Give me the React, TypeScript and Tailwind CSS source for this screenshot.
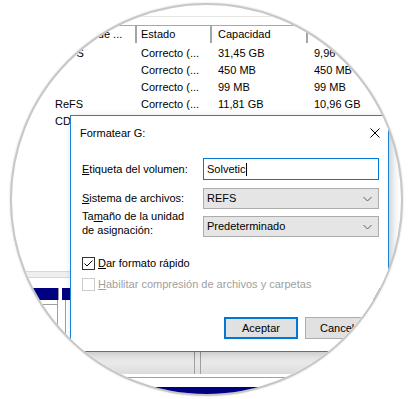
import React from "react";

function Row({ c1, c2, c3, c4 }: { c1?: string; c2?: string; c3?: string; c4?: string }) {
  return (
    <div className="flex h-[17px] items-center whitespace-nowrap">
      <div className="w-[38px] shrink-0" />
      <div className="w-[87px] shrink-0 pl-[5px]">{c1}</div>
      <div className="w-[75px] shrink-0 pl-[4px]">{c2}</div>
      <div className="w-[96px] shrink-0 pl-[6px]">{c3}</div>
      <div className="shrink-0 pl-[6px]">{c4}</div>
    </div>
  );
}

function Chevron() {
  return (
    <svg width="9" height="6" viewBox="0 0 9 6" className="shrink-0">
      <polyline points="0.5,1 4.5,5 8.5,1" fill="none" stroke="#5c5c5c" strokeWidth="1" />
    </svg>
  );
}

export default function App() {
  return (
    <div className="w-[410px] h-[399px] bg-white overflow-hidden font-['Liberation_Sans',Arial,sans-serif] text-[11px] text-black leading-none">
      <div className="ml-[10px] mt-[3px] w-[393px] h-[393px] rounded-full border-2 border-[#c8c8c8] overflow-hidden relative bg-white shadow-[0_0_2px_rgba(0,0,0,0.2)]">
        {/* list view */}
        <div className="h-[11px]" />
        <div className="h-px bg-[#e6e6e6]" />
        <div className="h-[8px]" />
        <div className="flex h-[18px] border-t border-[#a8a8a8] whitespace-nowrap">
          <div className="w-[38px] shrink-0" />
          <div className="w-[87px] shrink-0 pl-[5px] border-r-2 border-[#a5a5a5] flex items-center">Sistema de ...</div>
          <div className="w-[75px] shrink-0 pl-[4px] border-r-2 border-[#a5a5a5] flex items-center">Estado</div>
          <div className="w-[96px] shrink-0 pl-[6px] border-r-2 border-[#a5a5a5] flex items-center">Capacidad</div>
          <div className="shrink-0 pl-[6px] flex items-center">Espacio libre</div>
        </div>
        <div className="h-[2px]" />
        <Row c1="NTFS" c2="Correcto (..." c3="31,45 GB" c4="9,96 GB" />
        <Row c2="Correcto (..." c3="450 MB" c4="450 MB" />
        <Row c2="Correcto (..." c3="99 MB" c4="99 MB" />
        <Row c1="ReFS" c2="Correcto (..." c3="11,81 GB" c4="10,96 GB" />
        <Row c1="CDFS" c2="Correcto (..." c3="4,20 GB" c4="0 MB" />

        {/* graphical disk area */}
        <div className="h-[141px]" />
        <div className="h-[7px] bg-[#efefef] border-t border-[#d8d8d8] border-b border-[#a8a8a8]" />
        <div className="h-[10px]" />
        <div className="flex h-[12px]">
          <div className="w-[46px] bg-[#000080]" />
          <div className="w-[4px] border-l border-[#9a9a9a] bg-white" />
          <div className="flex-1 bg-[#000080]" />
        </div>
        <div className="flex h-[52px]">
          <div className="w-[45px] flex flex-col">
            <div className="h-[4px]" />
            <div className="h-px bg-[#a0a0a0]" />
          </div>
          <div className="w-px bg-[#a0a0a0]" />
          <div className="w-[7px]" />
          <div className="w-px bg-[#a0a0a0]" />
          <div className="flex-1" />
        </div>
        <div className="flex h-[22px] bg-gradient-to-b from-[#f7f7f7] to-[#dcdcdc]">
          <div className="w-[182px]" />
          <div className="w-px bg-[#a0a0a0]" />
          <div className="w-[5px]" />
          <div className="w-px bg-[#a0a0a0]" />
        </div>
        <div className="h-[3px]" />
        <div className="h-px bg-[#a0a0a0]" />
        <div className="h-[9px]" />
        <div className="h-[20px] bg-[#000080]" />

        {/* dialog */}
        <div className="absolute left-[58px] top-[110px] w-[319px] h-[237px] border border-[#1883d7] bg-white flex flex-col shadow-[3px_3px_8px_rgba(0,0,0,0.22)]">
          <div className="h-[34px] flex items-center justify-between pl-[9px] pr-[8px]">
            <span>Formatear G:</span>
            <svg width="10" height="10" viewBox="0 0 10 10">
              <path d="M0.5 0.5 L9.5 9.5 M9.5 0.5 L0.5 9.5" stroke="#000" strokeWidth="1" fill="none" />
            </svg>
          </div>
          <div className="pl-[11px] flex flex-col">
            <div className="mt-[8px] flex h-[22px] items-center">
              <div className="w-[121px] shrink-0">
                <span className="underline">E</span>tiqueta del volumen:
              </div>
              <div className="w-[176px] h-[22px] border border-[#0078d7] pl-[3px] flex items-center">
                <span>Solvetic</span>
                <span className="w-px h-[13px] bg-black" />
              </div>
            </div>
            <div className="mt-[8px] flex h-[21px] items-center">
              <div className="w-[121px] shrink-0">
                <span className="underline">S</span>istema de archivos:
              </div>
              <div className="w-[176px] h-[21px] bg-[#e5e5e5] border border-[#acacac] pl-[3px] pr-[6px] flex items-center justify-between">
                <span>REFS</span>
                <Chevron />
              </div>
            </div>
            <div className="flex h-[28px] items-start">
              <div className="w-[121px] shrink-0 leading-[13.5px] pt-px">
                Ta<span className="underline">m</span>año de la unidad
                <br />
                de asignación:
              </div>
              <div className="mt-[7px] w-[176px] h-[21px] bg-[#e5e5e5] border border-[#acacac] pl-[3px] pr-[6px] flex items-center justify-between">
                <span>Predeterminado</span>
                <Chevron />
              </div>
            </div>
            <div className="mt-[20px] flex h-[13px] items-center">
              <div className="w-[13px] h-[13px] border border-[#333333] bg-white flex items-center justify-center">
                <svg width="11" height="11" viewBox="0 0 11 11">
                  <polyline points="1.5,5.5 4,8 9.5,2.5" fill="none" stroke="#000" strokeWidth="1" />
                </svg>
              </div>
              <span className="ml-[3px]">
                <span className="underline">D</span>ar formato rápido
              </span>
            </div>
            <div className="mt-[8px] flex h-[13px] items-center text-[#a0a0a0]">
              <div className="w-[13px] h-[13px] border border-[#cccccc] bg-white" />
              <span className="ml-[3px] whitespace-nowrap">
                <span className="underline">H</span>abilitar compresión de archivos y carpetas
              </span>
            </div>
            <div className="mt-[26px] flex h-[22px]">
              <div className="ml-[142px] w-[74px] h-[22px] border-2 border-[#0078d7] bg-[#e1e1e1] flex items-center justify-center">
                Aceptar
              </div>
              <div className="ml-[7px] w-[74px] h-[22px] border border-[#adadad] bg-[#e1e1e1] flex items-center justify-center">
                Cancelar
              </div>
            </div>
          </div>
        </div>
      </div>
    </div>
  );
}
